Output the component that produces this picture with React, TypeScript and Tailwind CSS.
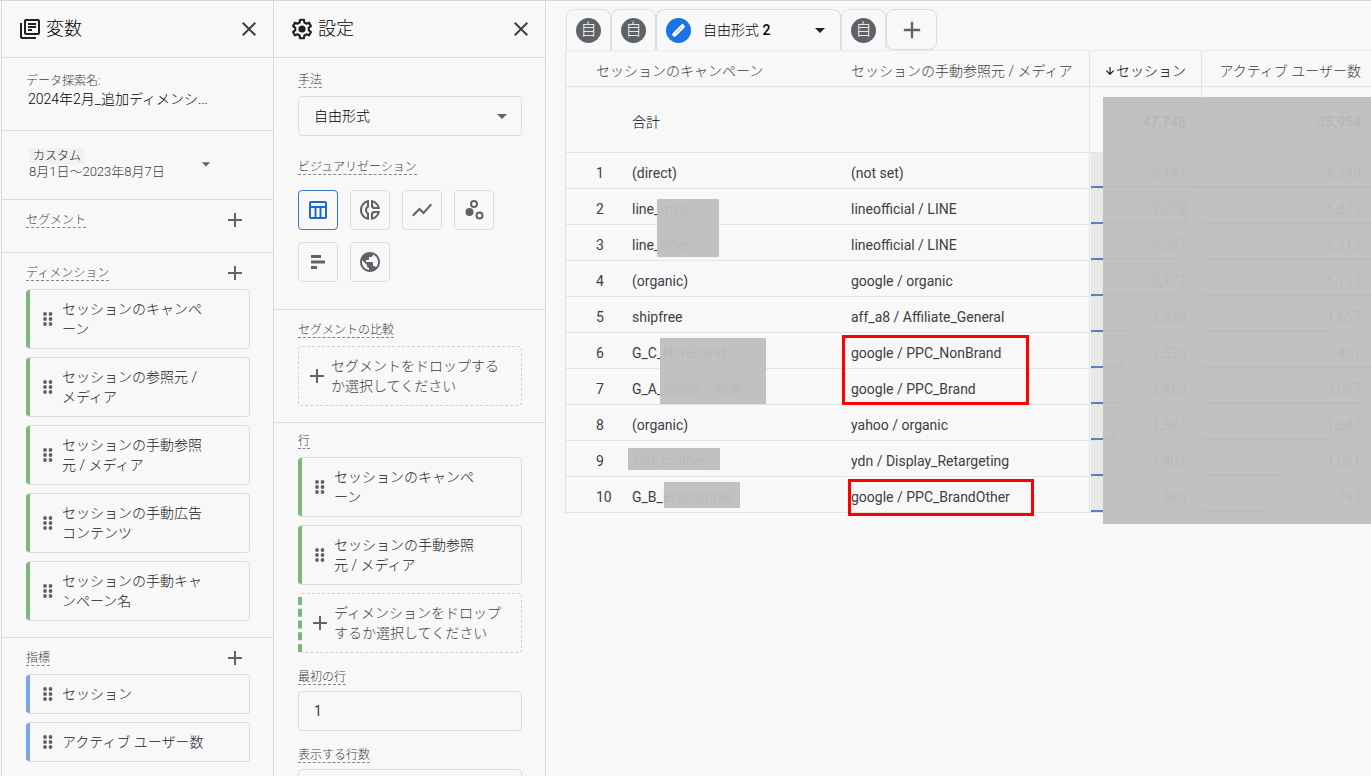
import { useState } from 'react';
import type { ReactNode } from 'react';
import {
  MdAdd,
  MdArrowDownward,
  MdArrowDropDown,
  MdClose,
  MdOutlineDonutSmall,
  MdOutlineLibraryBooks,
  MdPublic,
  MdShowChart,
} from 'react-icons/md';

const dimensions = [
  'セッションのキャンペーン',
  'セッションの参照元 / メディア',
  'セッションの手動参照元 / メディア',
  'セッションの手動広告コンテンツ',
  'セッションの手動キャンペーン名',
];

const metrics = ['セッション', 'アクティブ ユーザー数'];

const rows = [
  { campaign: '(direct)', source: '(not set)', sessions: 8191, users: 6348 },
  { campaign: 'line_msg', source: 'lineofficial / LINE', sessions: 7278, users: 5873 },
  { campaign: 'line_rmenu', source: 'lineofficial / LINE', sessions: 6527, users: 5212 },
  { campaign: '(organic)', source: 'google / organic', sessions: 6177, users: 5113 },
  { campaign: 'shipfree', source: 'aff_a8 / Affiliate_General', sessions: 2928, users: 1657 },
  { campaign: 'G_C_NonBrand', source: 'google / PPC_NonBrand', sessions: 2535, users: 2401 },
  { campaign: 'G_A_Brand｜関東', source: 'google / PPC_Brand', sessions: 2453, users: 2057 },
  { campaign: '(organic)', source: 'yahoo / organic', sessions: 1887, users: 1647 },
  { campaign: 'anq_mother', source: 'ydn / Display_Retargeting', sessions: 1402, users: 1021 },
  { campaign: 'G_B_BrandOther', source: 'google / PPC_BrandOther', sessions: 886, users: 793 },
];

// 1セッションあたりのバー幅
const SESSION_SCALE = 110 / 8191;
const USER_SCALE = 0.079;

const TableIcon = () => (
  <svg width="18" height="18" viewBox="0 0 18 18" fill="none" stroke="currentColor" strokeWidth="2">
    <rect x="1" y="1" width="16" height="16" rx="1" />
    <path d="M1 6h16M6.5 6v11M11.5 6v11" />
  </svg>
);

const ScatterIcon = () => (
  <svg width="20" height="20" viewBox="0 0 20 20" fill="none" stroke="currentColor" strokeWidth="2">
    <circle cx="10" cy="4" r="3" />
    <circle cx="5.5" cy="12" r="4" fill="currentColor" stroke="none" />
    <circle cx="15.5" cy="15.5" r="3" />
  </svg>
);

const BarsIcon = () => (
  <svg width="16" height="16" viewBox="0 0 16 16" fill="currentColor">
    <path d="M1 1h10v3H1zM1 6.500h14v3H1zM1 12h6v3H1z" />
  </svg>
);

const GearIcon = () => (
  <svg width="24" height="24" viewBox="1 1 22 22" fill="none" stroke="currentColor" strokeWidth="2" strokeLinejoin="round">
    <path d="M10.300 3.500h3.400l.500 2.600 1.800 1 2.500-.900 1.700 3-2 1.700v2.200l2 1.700-1.700 3-2.500-.900-1.800 1-.500 2.600h-3.400l-.500-2.600-1.800-1-2.500.900-1.700-3 2-1.700v-2.200l-2-1.700 1.700-3 2.500.900 1.800-1z" />
    <circle cx="12" cy="12" r="3.300" fill="currentColor" stroke="none" />
  </svg>
);

const DragDots = () => (
  <svg width="10" height="14" viewBox="0 0 10 14" fill="#5f6368" className="shrink-0">
    <circle cx="2" cy="2" r="1.900" />
    <circle cx="7.500" cy="2" r="1.900" />
    <circle cx="2" cy="7" r="1.900" />
    <circle cx="7.500" cy="7" r="1.900" />
    <circle cx="2" cy="12" r="1.900" />
    <circle cx="7.500" cy="12" r="1.900" />
  </svg>
);

const visuals = [
  { name: '表', icon: <TableIcon /> },
  { name: 'ドーナツ', icon: <MdOutlineDonutSmall size={24} /> },
  { name: '折れ線', icon: <MdShowChart size={24} /> },
  { name: '散布図', icon: <ScatterIcon /> },
  { name: '棒', icon: <BarsIcon /> },
  { name: '地図', icon: <MdPublic size={24} /> },
];

const dashed =
  'inline-block border-b border-dashed border-[#80868b] pt-0.5 text-xs leading-[14px] font-light text-[#3c4043]';

const PanelHeader = ({ icon, title }: { icon: ReactNode; title: string }) => (
  <header className="flex h-[57px] items-center border-b border-[#dadce0] pr-3 pl-4 text-[#202124]">
    {icon}
    <h2 className="ml-1 flex-1 text-lg font-light text-black">{title}</h2>
    <button type="button" aria-label="閉じる" className="text-[#3c4043]">
      <MdClose size={24} />
    </button>
  </header>
);

const SectionTitle = ({ title }: { title: string }) => (
  <div className="flex h-[17px] items-center justify-between pr-[3px]">
    <h3 className={dashed}>{title}</h3>
    <button type="button" aria-label={`${title}を追加`} className="text-[#5f6368]">
      <MdAdd size={24} />
    </button>
  </div>
);

const Chip = ({ label, metric }: { label: string; metric?: boolean }) => (
  <li className="flex overflow-hidden rounded border border-l-0 border-[#dadce0]">
    <span className={metric ? 'w-1 bg-[#79a6e6]' : 'w-1 bg-[#7ab77b]'} />
    <div className="flex items-center gap-[9px] py-[9px] pl-[13px]">
      <DragDots />
      <span className="w-[152px] text-sm leading-5 font-light text-[#202124]">{label}</span>
    </div>
  </li>
);

const IconTab = () => (
  <button
    type="button"
    className="flex w-[45px] items-center justify-center rounded-t-lg border border-b-0 border-[#e0e2e6] shadow-xs"
  >
    <span className="flex size-[25px] items-center justify-center rounded-full bg-[#5f6368] text-base leading-none font-light text-white">
      自
    </span>
  </button>
);

const App = () => {
  const [visual, setVisual] = useState(0);
  const [firstRow, setFirstRow] = useState('1');

  return (
    <div
      lang="ja"
      className="flex h-screen overflow-hidden border-t border-[#d5d5d5] bg-[#f8f8f8] pl-px font-['Roboto','Noto_Sans_CJK_JP',sans-serif] text-sm text-[#3c4043]"
    >
      {/* 変数 */}
      <aside className="w-[273px] shrink-0 border-x border-[#dadce0]">
        <PanelHeader icon={<MdOutlineLibraryBooks size={24} />} title="変数" />
        <section className="border-b border-[#dadce0] pt-[15px] pb-[21px] pl-6">
          <p className="text-xs leading-4 font-light">データ探索名:</p>
          <p className="pl-0.5 leading-5 font-light text-black">2024年2月_追加ディメンシ...</p>
        </section>
        <section className="border-b border-[#dadce0] pt-[17px] pb-[19px] pl-[27px]">
          <button type="button" className="flex w-[187px] items-center justify-between text-left font-light">
            <span>
              <span className="block w-[55px] bg-[#f0f1f2] pl-1 text-xs leading-4 text-[#202124]">カスタム</span>
              <span className="block text-[13px] leading-4">8月1日～2023年8月7日</span>
            </span>
            <MdArrowDropDown size={20} className="text-[#5f6368]" />
          </button>
        </section>
        <section className="border-b border-[#dadce0] pt-[11px] pr-[23px] pb-6 pl-6">
          <SectionTitle title="セグメント" />
        </section>
        <section className="border-b border-[#dadce0] pt-[11px] pr-[23px] pb-4 pl-6">
          <SectionTitle title="ディメンション" />
          <ul className="mt-2 flex flex-col gap-2">
            {dimensions.map((item) => (
              <Chip key={item} label={item} />
            ))}
          </ul>
        </section>
        <section className="pt-[11px] pr-[23px] pl-6">
          <SectionTitle title="指標" />
          <ul className="mt-2 flex flex-col gap-2">
            {metrics.map((item) => (
              <Chip key={item} label={item} metric />
            ))}
          </ul>
        </section>
      </aside>

      {/* 設定 */}
      <aside className="w-[272px] shrink-0 border-r border-[#dadce0]">
        <PanelHeader icon={<GearIcon />} title="設定" />
        <section className="border-b border-[#dadce0] pt-[13px] pr-[23px] pb-[27px] pl-6">
          <div className="flex">
            <label htmlFor="technique" className={dashed}>
              手法
            </label>
          </div>
          <div className="relative mt-2">
            <select
              id="technique"
              className="h-10 w-full appearance-none rounded border border-[#dadce0] pl-[15px] font-light text-black"
            >
              <option>自由形式</option>
            </select>
            <MdArrowDropDown size={24} className="pointer-events-none absolute top-2 right-2 text-[#5f6368]" />
          </div>
          <div className="mt-[22px] flex">
            <h3 className={dashed}>ビジュアリゼーション</h3>
          </div>
          <div className="mt-[15px] flex flex-wrap gap-3">
            {visuals.map((item, index) => (
              <button
                key={item.name}
                type="button"
                aria-label={item.name}
                onClick={() => setVisual(index)}
                className={
                  index === visual
                    ? 'flex size-10 items-center justify-center rounded border border-[#3c78c8] text-[#1a6bd8]'
                    : 'flex size-10 items-center justify-center rounded border border-[#dadce0] text-[#5f6368]'
                }
              >
                {item.icon}
              </button>
            ))}
          </div>
        </section>
        <section className="border-b border-[#dadce0] pt-[11px] pr-[23px] pb-4 pl-6">
          <div className="flex">
            <h3 className={dashed}>セグメントの比較</h3>
          </div>
          <button
            type="button"
            className="mt-2 flex w-full items-center gap-0.5 rounded border border-dashed border-[#d0d3d6] py-[9px] pl-1.5 text-left"
          >
            <MdAdd size={24} className="shrink-0 text-[#5f6368]" />
            <span className="w-[174px] leading-5 font-light">セグメントをドロップするか選択してください</span>
          </button>
        </section>
        <section className="pt-[9px] pr-[23px] pl-6">
          <div className="flex">
            <h3 className={dashed}>行</h3>
          </div>
          <ul className="mt-2 flex flex-col gap-2">
            <Chip label={dimensions[0]} />
            <Chip label={dimensions[2]} />
          </ul>
          <button
            type="button"
            className="mt-2 flex w-full items-stretch rounded border border-l-0 border-dashed border-[#d0d3d6] text-left"
          >
            <span className="mt-[3px] border-l-4 border-dashed border-[#7ab77b]" />
            <span className="flex items-center gap-0.5 py-[9px] pl-1.5">
              <MdAdd size={24} className="shrink-0 text-[#5f6368]" />
              <span className="w-[174px] leading-5 font-light">ディメンションをドロップするか選択してください</span>
            </span>
          </button>
          <div className="mt-[15px] flex">
            <label htmlFor="first-row" className={dashed}>
              最初の行
            </label>
          </div>
          <input
            id="first-row"
            value={firstRow}
            onChange={(e) => setFirstRow(e.target.value)}
            className="mt-1.5 block h-10 w-full rounded border border-[#dadce0] px-[15px]"
          />
          <div className="mt-[15px] flex">
            <label htmlFor="row-count" className={dashed}>
              表示する行数
            </label>
          </div>
          <input
            id="row-count"
            defaultValue="10"
            className="mt-1.5 block h-10 w-full rounded border border-[#dadce0] px-[15px]"
          />
        </section>
      </aside>

      {/* レポート */}
      <main className="min-w-0 flex-1 pt-2 pl-[19px]">
        <nav className="flex h-[41px] pl-px">
          <IconTab />
          <IconTab />
          <button
            type="button"
            className="flex w-[185px] items-center rounded-t-lg border border-b-0 border-[#dadce0] pr-2 pl-[9px] text-[#202124] shadow-xs"
          >
            <span className="flex size-[25px] items-center justify-center rounded-full bg-[#1a73e8]">
              <svg width="15" height="15" viewBox="0 0 15 15" fill="none" strokeLinecap="round">
                <path d="M3.500 11.500L11.500 3.500" stroke="#fff" strokeWidth="4.500" />
                <path d="M5 10L10.500 4.500" stroke="#8ab8f5" strokeWidth="1" />
              </svg>
            </span>
            <span className="ml-3 flex-1 text-left font-light text-black">
              自由形式 <span className="font-medium">2</span>
            </span>
            <MdArrowDropDown size={24} />
          </button>
          <IconTab />
          <button
            type="button"
            aria-label="タブを追加"
            className="flex w-[51px] items-center justify-center rounded-lg border border-[#dadce0] text-[#5f6368] shadow-xs"
          >
            <MdAdd size={28} />
          </button>
        </nav>

        <div className="relative overflow-hidden border-t border-[#e8eef2]">
          <table className="w-full table-fixed border-separate border-spacing-0 border-l border-[#dce3e5]">
            <colgroup>
              <col className="w-[66px]" />
              <col className="w-[219px]" />
              <col className="w-[239px]" />
              <col className="w-[112px]" />
              <col />
            </colgroup>
            <thead>
              <tr className="h-9 [&>th]:border-b [&>th]:border-[#e2e2e2] [&>th]:p-0 [&>th]:pt-1 [&>th]:font-light">
                <th colSpan={2} className="text-left">
                  <span className="pl-[30px]">セッションのキャンペーン</span>
                </th>
                <th className="border-r text-left">セッションの手動参照元 / メディア</th>
                <th className="border-r text-black">
                  <span className="flex items-center justify-end pr-[15px]">
                    <MdArrowDownward size={12} />
                    セッション
                  </span>
                </th>
                <th className="text-right">
                  <span className="pr-[10px]">アクティブ ユーザー数</span>
                </th>
              </tr>
            </thead>
            <tbody className="[&_td]:border-b [&_td]:border-[#e4e4e4] [&_td]:p-0 [&_td]:pt-1">
              <tr className="h-[66px] text-black">
                <td />
                <td className="font-light">合計</td>
                <td className="border-r" />
                <td className="border-r text-right font-bold">
                  <span className="pr-[15px]">47,748</span>
                </td>
                <td className="text-right font-bold">
                  <span className="pr-[10px]">35,954</span>
                </td>
              </tr>
              {rows.map((row, index) => (
                <tr key={row.source + row.campaign} className="h-9">
                  <td>
                    <span className="pl-[30px]">{index + 1}</span>
                  </td>
                  <td>{row.campaign}</td>
                  <td className="border-r">{row.source}</td>
                  <td className="relative border-r text-right">
                    <div
                      className="absolute inset-y-0 left-px border-b-2 border-[#5580c4] bg-[#e8e8e8]"
                      style={{ width: Math.round(row.sessions * SESSION_SCALE) }}
                    />
                    <span className="relative pr-[15px]">{row.sessions.toLocaleString('en-US')}</span>
                  </td>
                  <td className="relative text-right">
                    <div
                      className="absolute bottom-0 left-0 max-w-full border-b-2 border-[#5580c4]"
                      style={{ width: Math.round(row.users * USER_SCALE) }}
                    />
                    <span className="pr-[10px]">{row.users.toLocaleString('en-US')}</span>
                  </td>
                </tr>
              ))}
            </tbody>
          </table>
          <div className="h-[11px]" />

          {/* マスク */}
          <div className="absolute top-[46px] right-0 bottom-0 left-[538px] bg-[#bebebe]/96" />
          <div className="absolute top-[148px] left-[92px] h-[58px] w-[62px] bg-[#bebebe]/96" />
          <div className="absolute top-[287px] left-[95px] h-[66px] w-[106px] bg-[#bebebe]/96" />
          <div className="absolute top-[397px] left-[63px] h-[22px] w-[92px] bg-[#bebebe]/96" />
          <div className="absolute top-[431px] left-[99px] h-[26px] w-[76px] bg-[#bebebe]/96" />

          {/* 強調枠 */}
          <div className="absolute top-[284px] left-[277px] h-[70px] w-[187px] border-3 border-[#ff0000]" />
          <div className="absolute top-[428px] left-[283px] h-[37px] w-[186px] border-3 border-[#ff0000]" />
        </div>
      </main>
    </div>
  );
};

export default App;
